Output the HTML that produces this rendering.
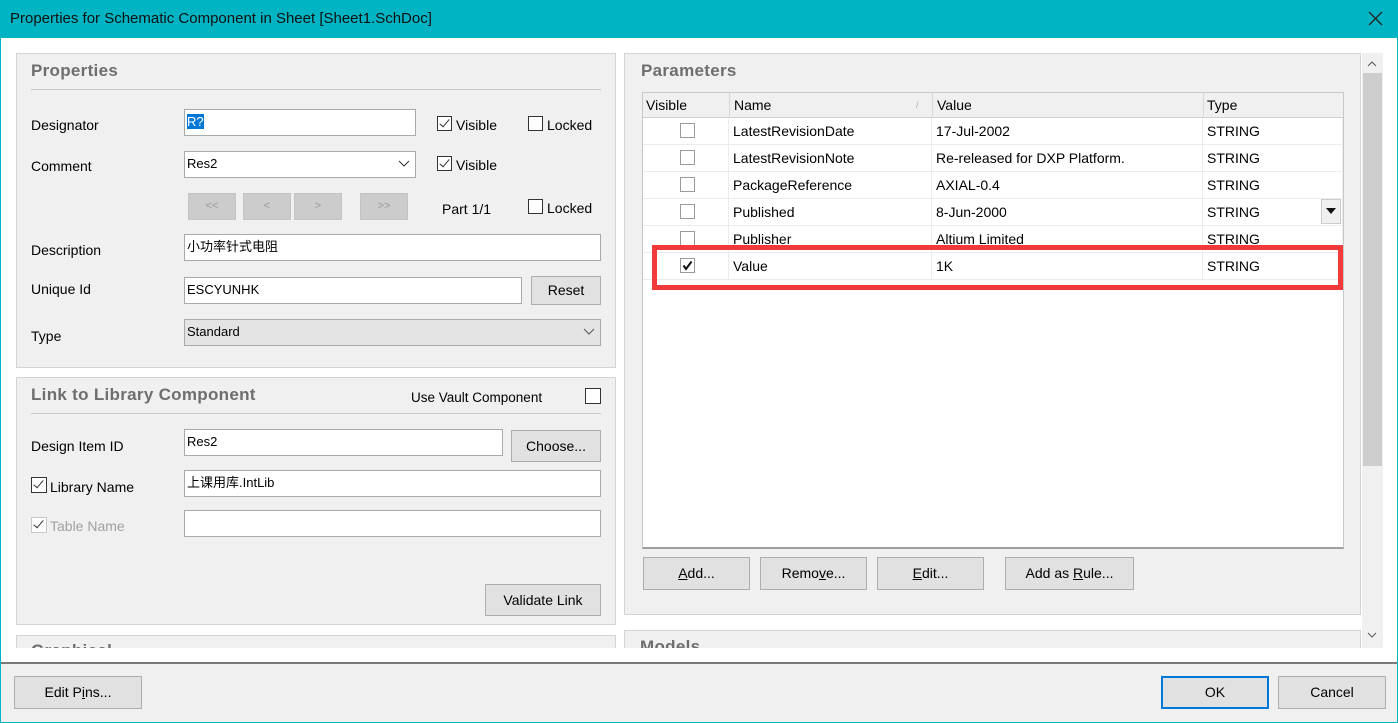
<!DOCTYPE html>
<html><head><meta charset="utf-8"><style>
*{box-sizing:border-box;margin:0;padding:0}
body{width:1398px;height:723px;overflow:hidden;position:relative;background:#fff;font-family:"Liberation Sans","Noto Sans CJK SC",sans-serif;font-size:14px;color:#000}
div,span{position:absolute}
.t{white-space:nowrap;line-height:16px}
.title{left:0;top:0;width:1398px;height:38px;background:#00b4c4;}
.panel{background:#f0f0f0;border:1px solid #d4d4d4}
.h{font-weight:bold;font-size:17px;color:#6e6e6e;letter-spacing:.3px}
.in{background:#fff;border:1px solid #a9a9a9;padding:0 2px;line-height:24px;font-size:13px}
.btn{background:#e1e1e1;border:1px solid #adadad;text-align:center;font-size:14px}
.cb{width:15px;height:15px;border:1px solid #333;background:#fff}
.cb.k::after{content:"";position:absolute;left:4px;top:0px;width:4px;height:9px;border:solid #333;border-width:0 1.5px 1.5px 0;transform:rotate(40deg)}
.dis{background:#cccccc;border:1px solid #c4c4c4;color:#999;text-align:center;font-size:11px;line-height:24px}
.cell{border-right:1px solid #ececec;border-bottom:1px solid #ececec;height:27px;line-height:27px;padding-left:4px;font-size:14px}
.ccb{width:15px;height:15px;border:1px solid #9a9a9a;background:#fff}
</style></head><body>
<div class="title"><span class="t" style="left:10px;top:11px;font-size:15px;color:#111">Properties for Schematic Component in Sheet [Sheet1.SchDoc]</span>
<svg style="position:absolute;left:1368px;top:11px" width="15" height="15"><path d="M1 1L14 14M14 1L1 14" stroke="#222" stroke-width="1.3"/></svg></div>
<div style="left:0;top:38px;width:1px;height:685px;background:#00b4c4"></div>
<div style="left:1397px;top:38px;width:1px;height:685px;background:#00b4c4"></div>
<div style="left:0;top:722px;width:1398px;height:1px;background:#00b4c4"></div>

<!-- Properties panel -->
<div class="panel" style="left:16px;top:53px;width:600px;height:315px"></div>
<span class="t h" style="left:31px;top:63px">Properties</span>
<div style="left:31px;top:89px;width:570px;height:1px;background:#c8c8cc"></div>
<span class="t" style="left:31px;top:117px">Designator</span>
<div class="in" style="left:184px;top:109px;width:232px;height:27px"><span style="position:static;background:#0078d7;color:#fff">R?</span></div>
<div class="cb k" style="left:437px;top:116px"></div><span class="t" style="left:456px;top:117px">Visible</span>
<div class="cb" style="left:528px;top:116px"></div><span class="t" style="left:547px;top:117px">Locked</span>
<span class="t" style="left:31px;top:158px">Comment</span>
<div class="in" style="left:184px;top:151px;width:232px;height:27px">Res2</div>
<svg style="position:absolute;left:398px;top:160px" width="12" height="8"><path d="M1 1L6 6L11 1" stroke="#333" fill="none"/></svg>
<div class="cb k" style="left:437px;top:156px"></div><span class="t" style="left:456px;top:157px">Visible</span>
<div class="dis" style="left:188px;top:193px;width:48px;height:27px">&lt;&lt;</div>
<div class="dis" style="left:243px;top:193px;width:48px;height:27px">&lt;</div>
<div class="dis" style="left:294px;top:193px;width:48px;height:27px">&gt;</div>
<div class="dis" style="left:360px;top:193px;width:48px;height:27px">&gt;&gt;</div>
<span class="t" style="left:442px;top:201px">Part 1/1</span>
<div class="cb" style="left:528px;top:199px"></div><span class="t" style="left:547px;top:200px">Locked</span>
<span class="t" style="left:31px;top:242px">Description</span>
<div class="in" style="left:184px;top:234px;width:417px;height:27px">小功率针式电阻</div>
<span class="t" style="left:31px;top:281px">Unique Id</span>
<div class="in" style="left:184px;top:277px;width:338px;height:27px">ESCYUNHK</div>
<div class="btn" style="left:531px;top:276px;width:70px;height:29px;line-height:27px">Reset</div>
<span class="t" style="left:31px;top:328px">Type</span>
<div class="in" style="left:184px;top:319px;width:417px;height:27px;background:#e4e4e4">Standard</div>
<svg style="position:absolute;left:583px;top:328px" width="12" height="8"><path d="M1 1L6 6L11 1" stroke="#555" fill="none"/></svg>

<!-- Link panel -->
<div class="panel" style="left:16px;top:377px;width:600px;height:248px"></div>
<span class="t h" style="left:31px;top:387px">Link to Library Component</span>
<span class="t" style="left:411px;top:390px;font-size:13.5px">Use Vault Component</span>
<div class="cb" style="left:585px;top:388px;width:16px;height:16px"></div>
<div style="left:31px;top:413px;width:570px;height:1px;background:#c8c8cc"></div>
<span class="t" style="left:31px;top:438px">Design Item ID</span>
<div class="in" style="left:184px;top:429px;width:319px;height:27px">Res2</div>
<div class="btn" style="left:511px;top:430px;width:90px;height:32px;line-height:30px">Choose...</div>
<div class="cb k" style="left:31px;top:477px;width:16px;height:16px"></div><span class="t" style="left:50px;top:479px">Library Name</span>
<div class="in" style="left:184px;top:470px;width:417px;height:27px">上课用库.IntLib</div>
<div class="cb k" style="left:31px;top:517px;width:16px;height:16px;border-color:#c8c8c8"></div><span class="t" style="left:50px;top:518px;color:#a0a0a0">Table Name</span>
<div class="in" style="left:184px;top:510px;width:417px;height:27px"></div>
<div class="btn" style="left:485px;top:584px;width:116px;height:32px;line-height:30px">Validate Link</div>
<div class="panel" style="left:16px;top:635px;width:600px;height:30px"></div>
<span class="t h" style="left:31px;top:643px">Graphical</span>

<!-- Parameters panel -->
<div class="panel" style="left:624px;top:53px;width:737px;height:562px"></div>
<span class="t h" style="left:641px;top:63px">Parameters</span>
<div style="left:642px;top:92px;width:702px;height:457px;background:#fff;border:1px solid #c8c8c8;border-bottom:2px solid #a0a0a0"></div>
<div style="left:643px;top:93px;width:700px;height:25px;background:#f0f0f0;border-bottom:1px solid #d0d0d0"></div>
<span class="t" style="left:646px;top:97px">Visible</span>
<span class="t" style="left:734px;top:97px">Name</span>
<span class="t" style="left:937px;top:97px">Value</span>
<span class="t" style="left:1207px;top:97px">Type</span>
<div style="left:729px;top:93px;width:1px;height:25px;background:#d8d8d8"></div>
<div style="left:932px;top:93px;width:1px;height:25px;background:#d8d8d8"></div>
<div style="left:1203px;top:93px;width:1px;height:25px;background:#d8d8d8"></div>
<span class="t" style="left:916px;top:97px;font-size:9px;color:#aaa">/</span>

<div style="left:643px;top:118px">
 <div class="cell" style="left:0;top:0;width:86px"></div><div class="cell" style="left:86px;top:0;width:203px">LatestRevisionDate</div><div class="cell" style="left:289px;top:0;width:271px">17-Jul-2002</div><div class="cell" style="left:560px;top:0;width:140px">STRING</div>
 <div class="cell" style="left:0;top:27px;width:86px"></div><div class="cell" style="left:86px;top:27px;width:203px">LatestRevisionNote</div><div class="cell" style="left:289px;top:27px;width:271px">Re-released for DXP Platform.</div><div class="cell" style="left:560px;top:27px;width:140px">STRING</div>
 <div class="cell" style="left:0;top:54px;width:86px"></div><div class="cell" style="left:86px;top:54px;width:203px">PackageReference</div><div class="cell" style="left:289px;top:54px;width:271px">AXIAL-0.4</div><div class="cell" style="left:560px;top:54px;width:140px">STRING</div>
 <div class="cell" style="left:0;top:81px;width:86px"></div><div class="cell" style="left:86px;top:81px;width:203px">Published</div><div class="cell" style="left:289px;top:81px;width:271px">8-Jun-2000</div><div class="cell" style="left:560px;top:81px;width:140px">STRING</div>
 <div class="cell" style="left:0;top:108px;width:86px"></div><div class="cell" style="left:86px;top:108px;width:203px">Publisher</div><div class="cell" style="left:289px;top:108px;width:271px">Altium Limited</div><div class="cell" style="left:560px;top:108px;width:140px">STRING</div>
 <div class="cell" style="left:0;top:135px;width:86px"></div><div class="cell" style="left:86px;top:135px;width:203px">Value</div><div class="cell" style="left:289px;top:135px;width:271px">1K</div><div class="cell" style="left:560px;top:135px;width:140px">STRING</div>
</div>
<div class="ccb" style="left:680px;top:123px"></div>
<div class="ccb" style="left:680px;top:150px"></div>
<div class="ccb" style="left:680px;top:177px"></div>
<div class="ccb" style="left:680px;top:204px"></div>
<div class="ccb" style="left:680px;top:231px"></div>
<div class="ccb" style="left:680px;top:258px"></div>
<svg style="position:absolute;left:682px;top:260px" width="11" height="11"><path d="M1.5 5.5L4 9L9.5 1.5" stroke="#111" stroke-width="2" fill="none"/></svg>
<div style="left:1321px;top:199px;width:20px;height:25px;background:#f0f0f0;border:1px solid #ccc"></div>
<svg style="position:absolute;left:1326px;top:208px" width="10" height="7"><path d="M0 0H10L5 6Z" fill="#111"/></svg>
<div style="left:652px;top:245px;width:691px;height:45px;border:5px solid #f33a3a"></div>

<div class="btn" style="left:643px;top:557px;width:107px;height:33px;line-height:31px"><u>A</u>dd...</div>
<div class="btn" style="left:760px;top:557px;width:107px;height:33px;line-height:31px">Remo<u>v</u>e...</div>
<div class="btn" style="left:877px;top:557px;width:107px;height:33px;line-height:31px"><u>E</u>dit...</div>
<div class="btn" style="left:1005px;top:557px;width:129px;height:33px;line-height:31px">Add as <u>R</u>ule...</div>
<div class="panel" style="left:624px;top:630px;width:737px;height:30px"></div>
<span class="t h" style="left:640px;top:639px">Models</span>

<!-- scrollbar -->
<div style="left:1362px;top:53px;width:21px;height:595px;background:#f0f0f0"></div>
<div style="left:1363px;top:73px;width:19px;height:393px;background:#cdcdcd"></div>
<svg style="position:absolute;left:1367px;top:60px" width="10" height="7"><path d="M1 6L5 2L9 6" stroke="#555" fill="none"/></svg>
<svg style="position:absolute;left:1367px;top:632px" width="10" height="7"><path d="M1 1L5 5L9 1" stroke="#555" fill="none"/></svg>

<div style="left:1px;top:648px;width:1396px;height:15px;background:#fff"></div>
<!-- footer -->
<div style="left:1px;top:662px;width:1396px;height:2px;background:#7a7a7a"></div>
<div style="left:1px;top:664px;width:1396px;height:58px;background:#f0f0f0"></div>
<div class="btn" style="left:14px;top:676px;width:128px;height:33px;line-height:31px">Edit P<u>i</u>ns...</div>
<div class="btn" style="left:1161px;top:676px;width:108px;height:33px;line-height:29px;border:2px solid #0078d7">OK</div>
<div class="btn" style="left:1278px;top:676px;width:108px;height:33px;line-height:31px">Cancel</div>
</body></html>
